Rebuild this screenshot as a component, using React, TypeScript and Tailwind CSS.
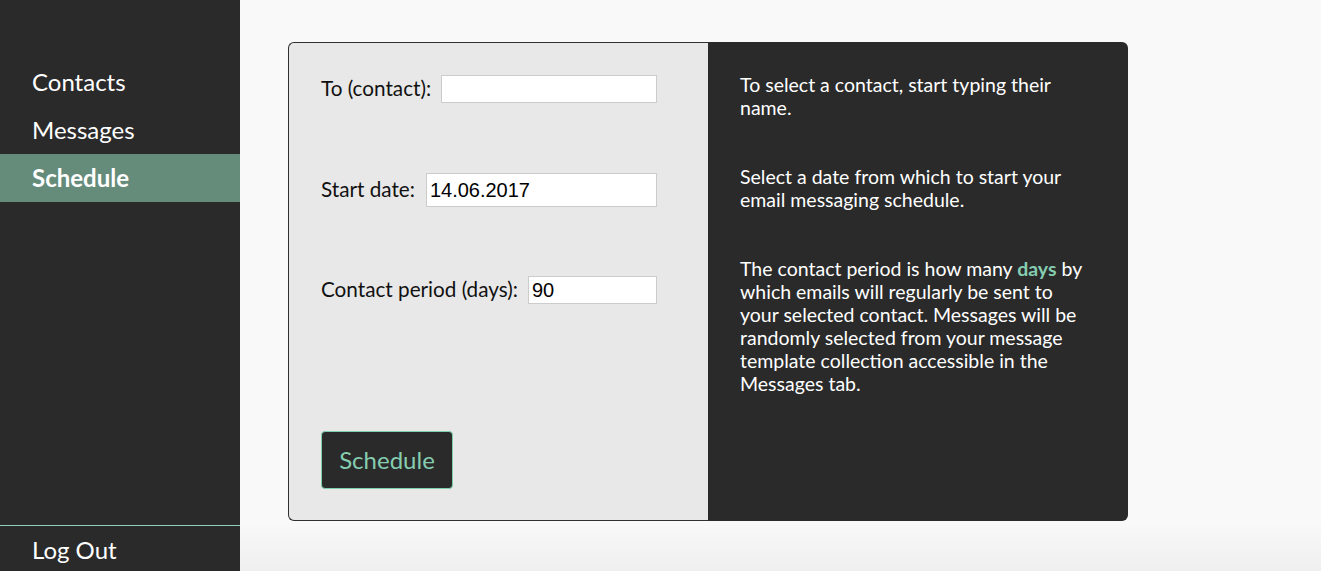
import React from 'react';

const navItems = ['Contacts', 'Messages', 'Schedule'];

const Sidebar: React.FC = () => (
  <aside className="w-[240px] h-full flex flex-col bg-[#2a2a2a] text-white shrink-0">
    <nav className="pt-[58px] flex flex-col">
      {navItems.map((item) => (
        <a
          key={item}
          className={
            item === 'Schedule'
              ? 'h-12 flex items-center pl-8 text-[24px] font-bold bg-[#658b7b]'
              : 'h-12 flex items-center pl-8 text-[24px]'
          }
        >
          {item}
        </a>
      ))}
    </nav>
    <div className="flex-1" />
    <div className="border-t border-[#8fd1b6] h-[46px] flex items-center pl-8 pt-0.5 text-[24px]">Log Out</div>
  </aside>
);

const inputCls =
  'flex-1 min-w-0 bg-white border border-[#cccccc] px-[3px] text-[20px] text-black outline-none font-["Liberation_Sans",Arial,sans-serif]';

const ScheduleForm: React.FC = () => (
  <div className="w-[420px] bg-[#e8e8e8] border border-r-0 border-[#2f2f2f] rounded-l-[6px] pl-8 pr-[51px] flex flex-col">
    <div className="flex items-center gap-[10px] mt-8 h-7">
      <label className="text-[20.7px] text-[#111]">To (contact):</label>
      <input className={`${inputCls} h-7`} />
    </div>
    <div className="flex items-center gap-[11px] mt-[70px] h-[34px]">
      <label className="text-[20.7px] text-[#111]">Start date:</label>
      <input className={`${inputCls} h-[34px]`} defaultValue="14.06.2017" />
    </div>
    <div className="flex items-center gap-[10px] mt-[69px] h-7">
      <label className="text-[20.7px] text-[#111]">Contact period (days):</label>
      <input className={`${inputCls} h-7`} defaultValue="90" />
    </div>
    <div className="mt-[127px]">
      <button className="h-[58px] w-[132px] rounded-[4px] border border-[#7fcfae] bg-[#2a2a2a] text-[#85cdb0] text-[24px]">
        Schedule
      </button>
    </div>
  </div>
);

const HelpPanel: React.FC = () => (
  <div className="w-[420px] bg-[#2a2a2a] rounded-r-[6px] pl-8 pr-[34px] pt-[31px] text-white text-[19.5px] leading-[23px]">
    <p>To select a contact, start typing their name.</p>
    <p className="mt-[46px]">Select a date from which to start your email messaging schedule.</p>
    <p className="mt-[46px]">
      The contact period is how many <span className="text-[#85cdb0] font-bold">days</span> by which emails will
      regularly be sent to your selected contact. Messages will be randomly selected from your message template
      collection accessible in the Messages tab.
    </p>
  </div>
);

export default function App() {
  return (
    <div className="h-[571px] w-[1321px] flex font-['Lato','Noto_Sans',sans-serif] overflow-hidden">
      <Sidebar />
      <main className="flex-1 flex flex-col bg-[#f9f9f9]">
        <div className="flex pl-12 pt-[42px] h-[521px]">
          <ScheduleForm />
          <HelpPanel />
        </div>
        <div className="flex-1 bg-gradient-to-b from-[#f9f9f9] to-[#efefef]" />
      </main>
    </div>
  );
}
